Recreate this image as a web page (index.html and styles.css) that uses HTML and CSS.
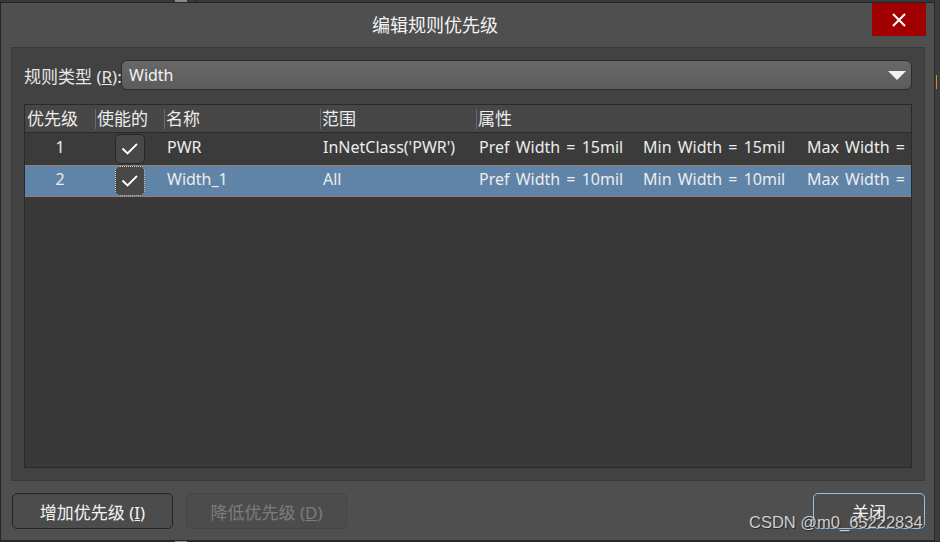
FILE: index.html
```html
<!DOCTYPE html>
<html lang="zh-CN">
<head>
  <meta charset="UTF-8">
  <title>编辑规则优先级</title>
  <link rel="stylesheet" href="styles.css">
</head>
<body>
  <div class="desk-top">
    <span class="desk-thumb"></span>
    <span class="desk-sep"></span>
  </div>

  <div class="desk">
    <div class="dialog">
      <!-- Title bar -->
      <div class="titlebar">
        <div class="title">编辑规则优先级</div>
        <button class="close-x" aria-label="close">
          <svg width="14" height="14" viewBox="0 0 14 14">
            <path d="M1 1 L13 13 M13 1 L1 13" stroke="#fff" stroke-width="2" fill="none"/>
          </svg>
        </button>
      </div>

      <!-- Rule type + priority table -->
      <div class="panel">
        <div class="rule-type">
          <label class="rule-label">规则类型 (<u>R</u>):</label>
          <div class="combo">
            <span>Width</span>
            <svg width="18" height="9" viewBox="0 0 18 9">
              <path d="M0 0 H18 L9 9 Z" fill="#f2f2f2"/>
            </svg>
          </div>
        </div>

        <div class="grid">
          <div class="row head">
            <div class="cell">优先级</div>
            <div class="cell">使能的</div>
            <div class="cell">名称</div>
            <div class="cell">范围</div>
            <div class="cell">属性</div>
          </div>

          <div class="row">
            <div class="cell num">1</div>
            <div class="cell chk"><span class="checkbox"><svg width="30" height="30" viewBox="0 0 30 30"><path d="M7.5 14.5 L12.5 19.5 L22 10" stroke="#fff" stroke-width="1.8" fill="none"/></svg></span></div>
            <div class="cell">PWR</div>
            <div class="cell">InNetClass('PWR')</div>
            <div class="cell props"><span>Pref Width = 15mil</span><span>Min Width = 15mil</span><span>Max Width = 15mil</span></div>
          </div>

          <div class="row selected">
            <div class="cell num">2</div>
            <div class="cell chk"><span class="checkbox focus"><svg width="30" height="30" viewBox="0 0 30 30"><path d="M7.5 14.5 L12.5 19.5 L22 10" stroke="#fff" stroke-width="1.8" fill="none"/></svg></span></div>
            <div class="cell">Width_1</div>
            <div class="cell">All</div>
            <div class="cell props"><span>Pref Width = 10mil</span><span>Min Width = 10mil</span><span>Max Width = 10mil</span></div>
          </div>
        </div>
      </div>

      <!-- Bottom buttons -->
      <div class="actions">
        <button class="btn">增加优先级 (<u>I</u>)</button>
        <button class="btn" disabled>降低优先级 (<u>D</u>)</button>
        <button class="btn btn-close">关闭</button>
      </div>
    </div>

    <div class="desk-side"><span class="side-mark"></span></div>
  </div>

  <div class="desk-bottom"><span class="desk-thumb"></span></div>

  <div class="watermark">CSDN @m0_65222834</div>
</body>
</html>
```

FILE: styles.css
```css
/* Page + background app */
body {
  margin: 0;
  width: 940px;
  height: 542px;
  overflow: hidden;
  background-color: #3a3a3a;
  font-family: "Noto Sans", "Noto Sans CJK SC", sans-serif;
  color: #ececec;
  position: relative;
}

.desk-top {
  height: 2px;
  display: flex;
  background-color: #383838;
}

.desk-thumb {
  width: 12px;
  margin-left: 175px;
  background-color: #8a8a8a;
}

.desk-sep {
  width: 1px;
  margin-left: 8px;
  background-color: #222;
}

.desk {
  display: flex;
}

.desk-side {
  flex: 1;
  background-color: #3c3c3c;
  padding-top: 73px;
}

.side-mark {
  display: block;
  width: 1px;
  height: 14px;
  margin-left: 1px;
  background-color: #d08a3c;
}

.desk-bottom {
  height: 1px;
  display: flex;
  background-color: #2a2a2a;
}

/* Dialog */
.dialog {
  width: 933px;
  height: 537px;
  border: 1px solid #262626;
  background-color: #4f4f4f;
  display: flex;
  flex-direction: column;
}

.titlebar {
  height: 44px;
  display: flex;
  align-items: flex-start;
}

.title {
  flex: 1;
  text-align: center;
  font-size: 18px;
  line-height: 44px;
  color: #f4f4f4;
  padding-right: 3px;
}

.close-x {
  width: 54px;
  height: 33px;
  margin-right: 8px;
  border: none;
  background-color: #a00000;
  display: flex;
  align-items: center;
  justify-content: center;
  padding: 0;
}

.panel {
  margin: 0 9px 0 10px;
  height: 434px;
  box-sizing: border-box;
  border: 1px solid #383838;
  background-color: #424242;
  padding: 12px;
  display: flex;
  flex-direction: column;
  gap: 14px;
}

.rule-type {
  display: flex;
  align-items: center;
  height: 30px;
}

.rule-label {
  font-size: 17px;
  color: #e6e6e6;
  width: 97px;
  white-space: nowrap;
}

.combo {
  flex: 1;
  height: 30px;
  box-sizing: border-box;
  border: 1px solid #2b2b2b;
  border-radius: 6px;
  background: linear-gradient(#686868, #5c5c5c);
  display: flex;
  align-items: center;
  justify-content: space-between;
  padding: 0 5px 0 7px;
  font-size: 16px;
  color: #f2f2f2;
}

/* Priority table */
.grid {
  flex: 1;
  border: 1px solid #2a2a2a;
  background-color: #393939;
}

.row {
  display: grid;
  grid-template-columns: 70px 69px 156px 156px 1fr;
  height: 32px;
  box-sizing: border-box;
  align-items: center;
  font-size: 16px;
  background-color: #3b3b3b;
}

.row .cell {
  padding-left: 3px;
  padding-bottom: 5px;
  white-space: nowrap;
  overflow: hidden;
}

.row.head {
  height: 28px;
  background-color: #474747;
  border-bottom: 1px solid #2a2a2a;
  font-size: 17px;
}

.row.head .cell {
  height: 20px;
  line-height: 20px;
  padding: 0 0 0 1px;
  border-left: 1px solid #6a6a6a;
  overflow: visible;
}

.row.head .cell:first-child {
  border-left: none;
  padding-left: 2px;
}

.row.selected {
  background-color: #5f84a7;
  border-top: 1px dotted #c47a38;
  border-bottom: 1px dotted #c47a38;
}

.cell.num {
  text-align: center;
  padding-left: 0;
}

.cell.chk {
  display: flex;
  justify-content: center;
  padding: 0;
}

.checkbox {
  width: 30px;
  height: 30px;
  box-sizing: border-box;
  border: 1px solid #262626;
  border-radius: 5px;
  background-color: #484848;
  display: flex;
  align-items: center;
  justify-content: center;
}

.checkbox svg {
  flex: none;
}

.checkbox.focus {
  border: 1px dotted #d8d8d8;
}

.props {
  word-spacing: 2px;
}

.props span {
  display: inline-block;
  width: 164px;
}

/* Buttons */
.actions {
  display: flex;
  padding: 12px 9px 0 11px;
  gap: 13px;
}

.btn {
  width: 161px;
  height: 36px;
  border: 1px solid #242424;
  border-radius: 5px;
  background-color: #4c4c4c;
  color: #f2f2f2;
  font-family: inherit;
  font-size: 17px;
}

.btn:disabled {
  border-color: #464646;
  color: #7c7c7c;
}

.btn-close {
  width: 112px;
  margin-left: auto;
  border-color: #8ec2f0;
}

.watermark {
  position: absolute;
  left: 749px;
  top: 513px;
  font-family: "Liberation Sans", Arial, sans-serif;
  font-size: 16.5px;
  color: #cfcfcf;
  text-shadow: 1px 1px 1px rgba(0, 0, 0, 0.5);
}
```
